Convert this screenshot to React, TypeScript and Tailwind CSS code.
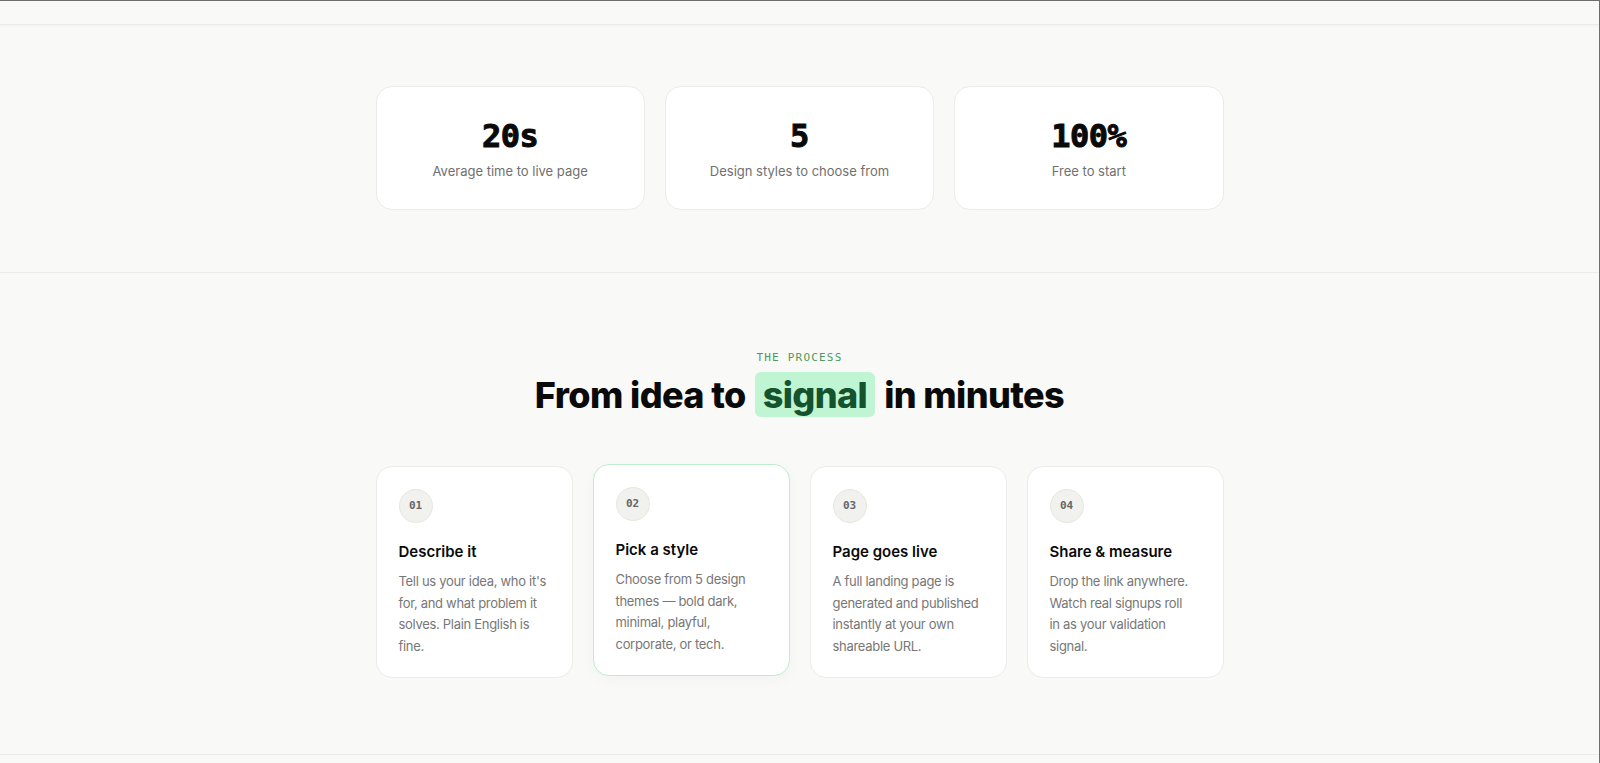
import React from "react";

const stats = [
  { value: "20s", label: "Average time to live page" },
  { value: "5", label: "Design styles to choose from" },
  { value: "100%", label: "Free to start" },
];

const steps = [
  {
    n: "01",
    title: "Describe it",
    desc: "Tell us your idea, who it's for, and what problem it solves. Plain English is fine.",
    descCls: "",
  },
  {
    n: "02",
    title: "Pick a style",
    desc: "Choose from 5 design themes — bold dark, minimal, playful, corporate, or tech.",
    active: true,
    descCls: "",
  },
  {
    n: "03",
    title: "Page goes live",
    desc: "A full landing page is generated and published instantly at your own shareable URL.",
    descCls: "",
  },
  {
    n: "04",
    title: "Share & measure",
    desc: "Drop the link anywhere. Watch real signups roll in as your validation signal.",
    descCls: "max-w-[144px]",
  },
];

const sans = "font-['Inter','Noto_Sans',sans-serif]";
const mono = "font-['DejaVu_Sans_Mono','Liberation_Mono',monospace]";

export default function App() {
  return (
    <div className={`min-h-[763px] bg-[#f9f9f7] border-t border-t-[#6f6f6f] border-r border-r-[#6f6f6f] ${sans}`}>
      <div className="h-[24px] border-b border-[#ebebe8] shadow-[0_1px_3px_rgba(0,0,0,0.04)]" />

      <section className="pt-[61px] pb-[62px] border-b border-[#ebebe8]">
        <div className="mx-auto w-[848px] grid grid-cols-3 gap-5">
          {stats.map((s) => (
            <div
              key={s.value}
              className="h-[124px] bg-white border border-[#ecebe7] rounded-2xl flex flex-col items-center justify-center"
            >
              <div
                className={`${mono} text-[32px] font-bold leading-[40px] text-[#0a0a0a] tracking-[-0.5px] [-webkit-text-stroke:1px_#0a0a0a]`}
              >
                {s.value}
              </div>
              <div className="mt-[6px] text-[13px] leading-[18px] text-[#707070]">{s.label}</div>
            </div>
          ))}
        </div>
      </section>

      <section className="pt-[77px] pb-[76px] border-b border-[#ebebe8]">
        <div className="mx-auto w-[848px] flex flex-col items-center">
          <div className={`${mono} text-[11px] leading-[16px] tracking-[1.2px] text-[#4c9a5c]`}>THE PROCESS</div>
          <h2 className="mt-[6px] text-[36px] leading-[44px] font-extrabold tracking-[-0.6px] text-[#0a0a0a] flex items-center">
            <span>From idea to</span>
            <span className="mx-[9px] px-[8px] h-[45px] flex items-center rounded-[6px] bg-[#bff5d3] text-[#14532d]">
              signal
            </span>
            <span>in minutes</span>
          </h2>
          <div className="mt-[49px] w-full grid grid-cols-4 gap-5 items-start">
            {steps.map((s) => (
              <div
                key={s.n}
                className={`h-[212px] bg-white rounded-2xl border p-[22px] ${
                  s.active
                    ? "border-[#bfeccd] -translate-y-[2px] shadow-[0_4px_14px_rgba(0,0,0,0.03)]"
                    : "border-[#ecebe7]"
                }`}
              >
                <div
                  className={`w-[34px] h-[34px] rounded-full bg-[#f1f1ee] border border-[#e6e6e2] flex items-center justify-center ${mono} text-[11px] font-bold text-[#666]`}
                >
                  {s.n}
                </div>
                <div className="mt-[18px] text-[15px] leading-[22px] font-semibold text-[#0a0a0a]">{s.title}</div>
                <div className={`mt-[8px] text-[13px] leading-[21.5px] tracking-[-0.3px] text-[#777] ${s.descCls}`}>
                  {s.desc}
                </div>
              </div>
            ))}
          </div>
        </div>
      </section>
    </div>
  );
}
